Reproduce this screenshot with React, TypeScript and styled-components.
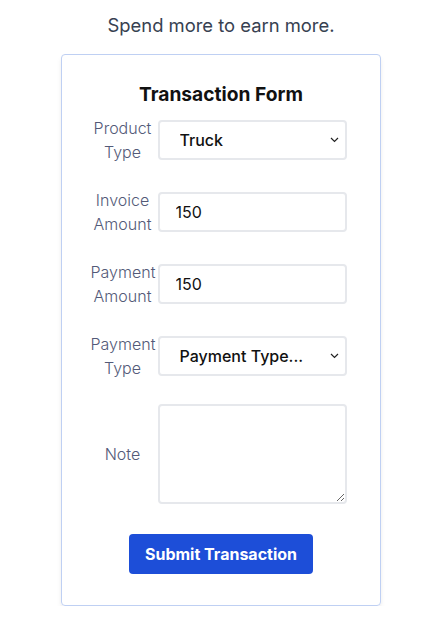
import styled, { createGlobalStyle } from "styled-components";

const GlobalStyle = createGlobalStyle`
  body {
    margin: 0;
    background: #ffffff;
    font-family: Inter, "Noto Sans", sans-serif;
  }
`;

const Page = styled.div`
  display: flex;
  flex-direction: column;
  align-items: center;
  padding: 11px 0 0 10px;
`;

const Tagline = styled.p`
  margin: 0;
  font-size: 18.4px;
  line-height: 28px;
  color: #374151;
`;

const Card = styled.form`
  margin-top: 15px;
  width: 320px;
  box-sizing: border-box;
  border: 1px solid #bfd0f3;
  border-radius: 4px;
  box-shadow: 0 4px 6px -1px rgba(0, 0, 0, 0.08), 0 2px 4px -1px rgba(0, 0, 0, 0.04);
  padding: 25px 0 31px;
  display: flex;
  flex-direction: column;
  align-items: center;
  gap: 24px;
`;

const Title = styled.h2`
  margin: 0 0 -16px;
  font-size: 19.2px;
  line-height: 28px;
  font-weight: 700;
  color: #111111;
`;

const Row = styled.div`
  display: flex;
  align-items: center;
  gap: 3px;
  margin-left: -5px;
`;

const Label = styled.label`
  width: 64px;
  text-align: center;
  font-size: 16px;
  line-height: 24px;
  font-weight: 300;
  color: #535a78;
`;

const fieldBase = `
  box-sizing: border-box;
  width: 189px;
  border: 2px solid #e6e8ec;
  border-radius: 4px;
  background: #ffffff;
  font-family: Inter, "Noto Sans", sans-serif;
  font-size: 16px;
  color: #111111;
  outline: none;
`;

const TextInput = styled.input`
  ${fieldBase}
  height: 40px;
  padding: 0 16px;
`;

const SelectWrap = styled.div`
  position: relative;
  width: 189px;
`;

const Select = styled.select`
  ${fieldBase}
  height: 40px;
  padding: 0 20px;
  appearance: none;
  font-weight: 500;
`;

const Chevron = styled.svg`
  position: absolute;
  right: 8px;
  top: 50%;
  margin-top: -3px;
  pointer-events: none;
`;

const NoteArea = styled.textarea`
  ${fieldBase}
  height: 100px;
  padding: 8px 12px;
`;

const SubmitButton = styled.button`
  margin-top: 6px;
  height: 40px;
  padding: 0 16px;
  border: none;
  border-radius: 4px;
  background: #1d4ed8;
  color: #ffffff;
  font-family: Inter, "Noto Sans", sans-serif;
  font-size: 16px;
  font-weight: 700;
`;

function SelectField({ value, options }: { value: string; options: string[] }) {
  return (
    <SelectWrap>
      <Select defaultValue={value}>
        {options.map((o) => (
          <option key={o}>{o}</option>
        ))}
      </Select>
      <Chevron width="9" height="6" viewBox="0 0 9 6">
        <path d="M1 1l3.5 3.5L8 1" fill="none" stroke="#222" strokeWidth="1.2" />
      </Chevron>
    </SelectWrap>
  );
}

function App() {
  return (
    <>
      <GlobalStyle />
      <Page>
        <Tagline>Spend more to earn more.</Tagline>
        <Card onSubmit={(e) => e.preventDefault()}>
          <Title>Transaction Form</Title>
          <Row>
            <Label>Product Type</Label>
            <SelectField value="Truck" options={["Truck", "Car", "Van"]} />
          </Row>
          <Row>
            <Label>Invoice Amount</Label>
            <TextInput defaultValue="150" />
          </Row>
          <Row>
            <Label>Payment Amount</Label>
            <TextInput defaultValue="150" />
          </Row>
          <Row>
            <Label>Payment Type</Label>
            <SelectField value="Payment Type..." options={["Payment Type...", "Cash", "Card"]} />
          </Row>
          <Row>
            <Label>Note</Label>
            <NoteArea />
          </Row>
          <SubmitButton type="submit">Submit Transaction</SubmitButton>
        </Card>
      </Page>
    </>
  );
}

export default App;
